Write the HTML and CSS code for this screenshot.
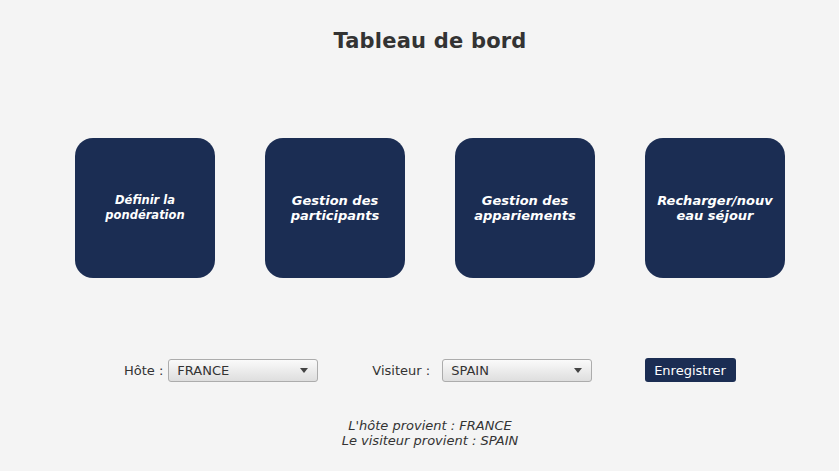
FILE: index.html
```html
<!DOCTYPE html>
<html lang="fr">
<head>
<meta charset="utf-8">
<title>Tableau de bord</title>
<link rel="stylesheet" href="styles.css">
</head>
<body>
<main class="page">
  <h1 class="title">Tableau de bord</h1>
  <section class="cards">
    <button class="card card-small">Définir la<br>pondération</button>
    <button class="card">Gestion des<br>participants</button>
    <button class="card">Gestion des<br>appariements</button>
    <button class="card">Recharger/nouv<br>eau séjour</button>
  </section>
  <section class="controls">
    <label class="lbl lbl-host">Hôte :</label>
    <div class="combo combo-host"><span>FRANCE</span><i class="arrow"></i></div>
    <label class="lbl lbl-visitor">Visiteur :</label>
    <div class="combo combo-visitor"><span>SPAIN</span><i class="arrow"></i></div>
    <button class="save">Enregistrer</button>
  </section>
  <p class="status">L'hôte provient : FRANCE<br>Le visiteur provient : SPAIN</p>
</main>
</body>
</html>
```
FILE: styles.css
```css
html, body {
  margin: 0;
  padding: 0;
  background: #f4f4f4;
  font-family: "DejaVu Sans", sans-serif;
  color: #333333;
}
.page {
  width: 818px;
  margin-left: 21px;
  height: 471px;
  overflow: hidden;
}
.title {
  margin: 0;
  padding-top: 29px;
  font-size: 21px;
  letter-spacing: 0.2px;
  line-height: 24px;
  font-weight: bold;
  text-align: center;
  color: #333333;
}
.cards {
  margin-top: 85px;
  display: flex;
  justify-content: center;
  gap: 50px;
}
.card {
  width: 140px;
  height: 140px;
  border: none;
  border-radius: 18px;
  background: #1b2d53;
  color: #ffffff;
  font-family: "DejaVu Sans", sans-serif;
  font-size: 13px;
  line-height: 15px;
  font-weight: bold;
  font-style: italic;
  text-align: center;
  padding: 0;
  display: flex;
  align-items: center;
  justify-content: center;
}
.card-small {
  font-size: 11.5px;
  line-height: 15px;
}
.controls {
  margin-top: 80px;
  height: 24px;
  display: flex;
  align-items: center;
  padding-left: 103px;
  font-size: 13px;
}
.lbl { color: #333333; }
.combo {
  box-sizing: border-box;
  width: 150px;
  height: 23px;
  border: 1px solid #acacac;
  border-radius: 3px;
  background: linear-gradient(#fafafa, #dedede);
  display: flex;
  align-items: center;
  padding-left: 8px;
  padding-right: 9px;
  justify-content: space-between;
  color: #333333;
}
.combo-host { margin-left: 5px; }
.lbl-visitor { margin-left: 54px; }
.combo-visitor { margin-left: 12px; }
.arrow {
  width: 0;
  height: 0;
  border-left: 4.5px solid transparent;
  border-right: 4.5px solid transparent;
  border-top: 5px solid #444444;
}
.save {
  margin-left: 53px;
  height: 24px;
  border: none;
  border-radius: 3px;
  background: #1b2d53;
  color: #ffffff;
  font-family: "DejaVu Sans", sans-serif;
  font-size: 13px;
  padding: 0 10px 0 9px;
}
.status {
  margin: 36px 0 0 0;
  text-align: center;
  font-style: italic;
  font-size: 13px;
  line-height: 15px;
  color: #333333;
}
```
